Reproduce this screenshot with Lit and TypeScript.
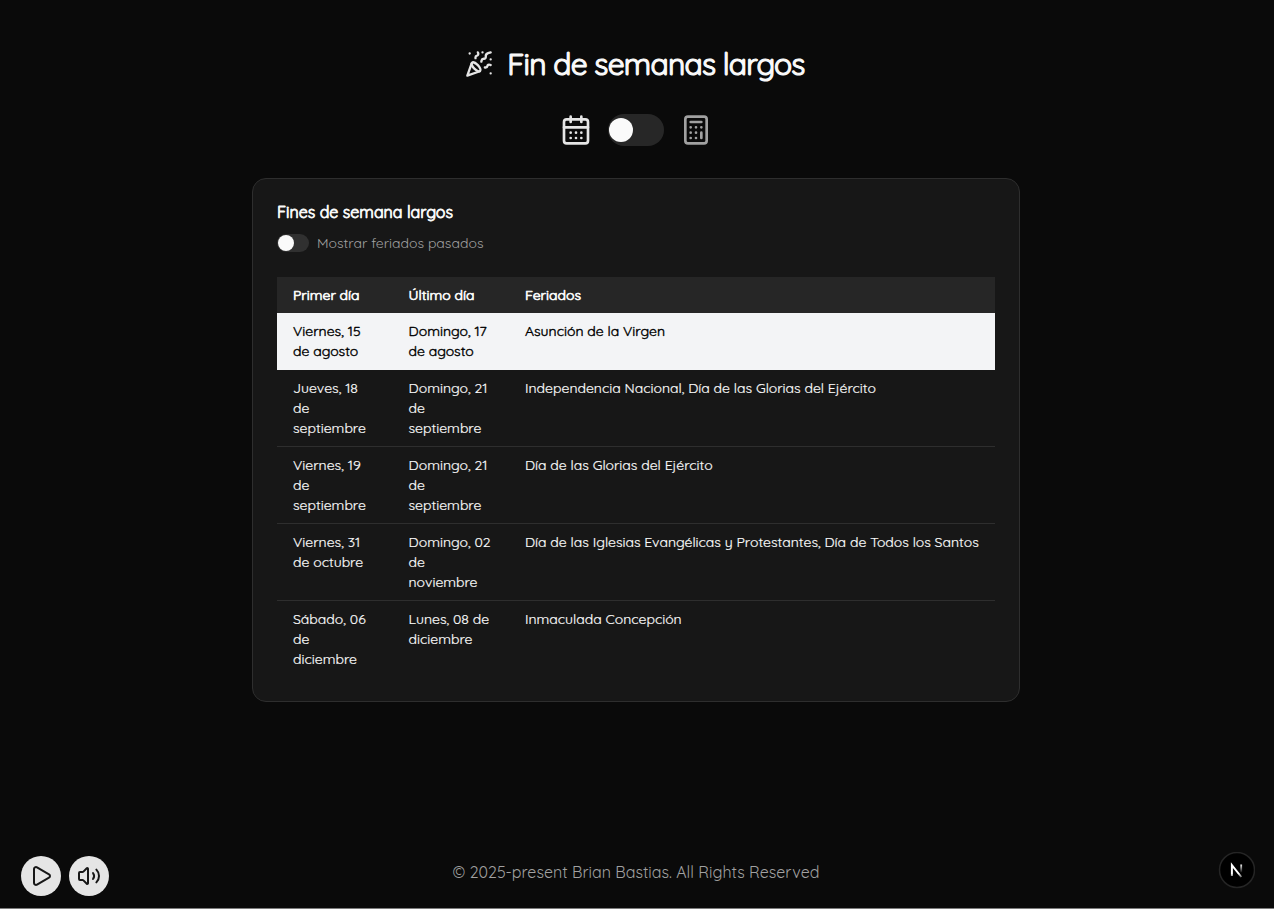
import { LitElement, html, css, svg } from "lit";
import { customElement } from "lit/decorators.js";

const icon = (size: number, body: unknown, width = 2) => html`<svg width=${size} height=${size} viewBox="0 0 24 24" fill="none" stroke="currentColor" stroke-width=${width} stroke-linecap="round" stroke-linejoin="round">${body}</svg>`;

const party = svg`<path d="M5.8 11.3 2 22l10.7-3.79M4 3h.01M22 8h.01M15 2h.01M22 20h.01"/><path d="m22 2-2.24.75a2.9 2.9 0 0 0-1.96 3.12c.1.86-.57 1.63-1.45 1.63h-.38c-.86 0-1.6.6-1.76 1.44L14 10"/><path d="m22 13-.82-.33c-.86-.34-1.82.2-1.98 1.11c-.11.7-.72 1.22-1.43 1.22H17"/><path d="m11 2 .33.82c.34.86-.2 1.82-1.11 1.98C9.52 4.9 9 5.52 9 6.23V7"/><path d="M11 13c1.93 1.93 2.83 4.17 2 5-.83.83-3.07-.07-5-2-1.93-1.93-2.83-4.17-2-5 .83-.83 3.07.07 5 2Z"/>`;
const calendar = svg`<path d="M8 2v4M16 2v4"/><rect width="18" height="18" x="3" y="4" rx="2"/><path d="M3 10h18M8 14h.01M12 14h.01M16 14h.01M8 18h.01M12 18h.01M16 18h.01"/>`;
const calculator = svg`<rect width="16" height="20" x="4" y="2" rx="2"/><path d="M8 6h8M16 14v4M16 10h.01M12 10h.01M8 10h.01M12 14h.01M8 14h.01M12 18h.01M8 18h.01"/>`;
const play = svg`<path d="M5 5a2 2 0 0 1 3.008-1.728l11.997 6.998a2 2 0 0 1 .003 3.458l-12 7A2 2 0 0 1 5 19z"/>`;
const volume = svg`<path d="M11 4.702a.705.705 0 0 0-1.203-.498L6.413 7.587A1.4 1.4 0 0 1 5.416 8H3a1 1 0 0 0-1 1v6a1 1 0 0 0 1 1h2.416a1.4 1.4 0 0 1 .997.413l3.383 3.384A.705.705 0 0 0 11 19.298z"/><path d="M16 9a5 5 0 0 1 0 6M19.364 18.364a9 9 0 0 0 0-12.728"/>`;

interface Weekend { first: string[]; last: string[]; name: string; next?: boolean }
const weekends: Weekend[] = [
  { first: ["Viernes, 15", "de agosto"], last: ["Domingo, 17", "de agosto"], name: "Asunción de la Virgen", next: true },
  { first: ["Jueves, 18", "de", "septiembre"], last: ["Domingo, 21", "de", "septiembre"], name: "Independencia Nacional, Día de las Glorias del Ejército" },
  { first: ["Viernes, 19", "de", "septiembre"], last: ["Domingo, 21", "de", "septiembre"], name: "Día de las Glorias del Ejército" },
  { first: ["Viernes, 31", "de octubre"], last: ["Domingo, 02", "de", "noviembre"], name: "Día de las Iglesias Evangélicas y Protestantes, Día de Todos los Santos" },
  { first: ["Sábado, 06", "de", "diciembre"], last: ["Lunes, 08 de", "diciembre"], name: "Inmaculada Concepción" },
];
const lines = (parts: string[]) => parts.map((p) => html`<div>${p}</div>`);

@customElement("app-root")
export class AppRoot extends LitElement {
  static styles = css`
    :host { display: block; height: 909px; background: #0a0a0a; color: #fafafa; font-family: Quicksand, Lato, sans-serif; }
    * { box-sizing: border-box; }
    svg { display: block; flex: none; }
    .page { height: 909px; padding: 46px 2px 0 0; display: flex; flex-direction: column; align-items: center; border-bottom: 1px solid #7c7c7c; position: relative; overflow: hidden; }
    .title { display: flex; align-items: center; gap: 14px; height: 36px; padding-right: 2px; color: #e5e5e5; }
    h1 { margin: 0; color: #fafafa; font-size: 30px; line-height: 36px; font-weight: 400; letter-spacing: -0.75px; white-space: nowrap; -webkit-text-stroke: 1.2px currentColor; }
    .modes { display: flex; align-items: center; gap: 16px; margin-top: 32px; height: 32px; color: #e5e5e5; }
    .muted { color: #a1a1a1; }
    .switch { width: 56px; height: 32px; border-radius: 16px; background: #272727; display: flex; align-items: center; padding-left: 1px; }
    .switch::before { content: ""; width: 24px; height: 24px; border-radius: 50%; background: #fafafa; }
    .small { width: 32px; height: 18px; background: #303030; }
    .small::before { width: 16px; height: 16px; }
    .card { width: 768px; height: 524px; margin-top: 32px; padding: 24px; border: 1px solid #2e2e2e; border-radius: 14px; background: #171717; }
    h2 { margin: 0; font-size: 16px; line-height: 18px; font-weight: 400; -webkit-text-stroke: 0.8px currentColor; }
    .filter { display: flex; align-items: center; gap: 8px; height: 20px; margin-top: 12px; font-size: 14px; color: #a1a1a1; }
    .table { margin-top: 24px; font-size: 14px; line-height: 20px; font-weight: 400; -webkit-text-stroke: 0.2px currentColor; }
    .row { display: grid; grid-template-columns: 115.5px 116.5px 1fr; padding: 8px 0 8px 16px; border-bottom: 1px solid #2e2e2e; white-space: nowrap; }
    .row:last-child { border-bottom: 0; }
    .head { background: #262626; border: 0; height: 36px; -webkit-text-stroke: 0.7px currentColor; }
    .next { background: #f3f4f6; color: #000; border-color: #f3f4f6; -webkit-text-stroke: 0.4px currentColor; }
    footer { margin-top: 160px; font-size: 16px; line-height: 20px; color: #a1a1a1; white-space: nowrap; }
    .player { position: absolute; left: 21px; bottom: 12px; display: flex; gap: 8px; }
    .round { width: 40px; height: 40px; border-radius: 50%; background: #e5e5e5; color: #171717; display: grid; place-items: center; }
    .badge { position: absolute; left: 1218px; top: 852px; }
  `;
  render() {
    return html`<div class="page">
      <div class="title">${icon(28, party)}<h1>Fin de semanas largos</h1></div>
      <div class="modes">${icon(32, calendar)}<div class="switch"></div><span class="muted">${icon(32, calculator)}</span></div>
      <main class="card">
        <h2>Fines de semana largos</h2>
        <div class="filter"><div class="switch small"></div><span>Mostrar feriados pasados</span></div>
        <div class="table">
          <div class="row head"><div>Primer día</div><div>Último día</div><div>Feriados</div></div>
          ${weekends.map((w) => html`<div class="row ${w.next ? "next" : ""}"><div>${lines(w.first)}</div><div>${lines(w.last)}</div><div>${w.name}</div></div>`)}
        </div>
      </main>
      <footer>© 2025-present Brian Bastias. All Rights Reserved</footer>
      <div class="player"><div class="round">${icon(24, play)}</div><div class="round">${icon(24, volume)}</div></div>
      <svg class="badge" width="37" height="37" viewBox="0 0 37 37" fill="none">
        <defs><linearGradient id="a" x1="0" y1="18" x2="0" y2="25" gradientUnits="userSpaceOnUse"><stop offset=".5" stop-color="#fff"/><stop offset="1" stop-color="#fff" stop-opacity=".4"/></linearGradient><linearGradient id="b" x1="0" y1="12" x2="0" y2="21" gradientUnits="userSpaceOnUse"><stop stop-color="#fff"/><stop offset="1" stop-color="#fff" stop-opacity="0"/></linearGradient></defs>
        <circle cx="19" cy="18" r="17.5" fill="#000" stroke="#252525" stroke-width="1.5"/>
        <path d="M13.9 24V13.2L23.3 25" stroke="url(#a)" stroke-width="2"/><path d="M23.2 12.5v8" stroke="url(#b)" stroke-width="1.8"/>
      </svg>
    </div>`;
  }
}
